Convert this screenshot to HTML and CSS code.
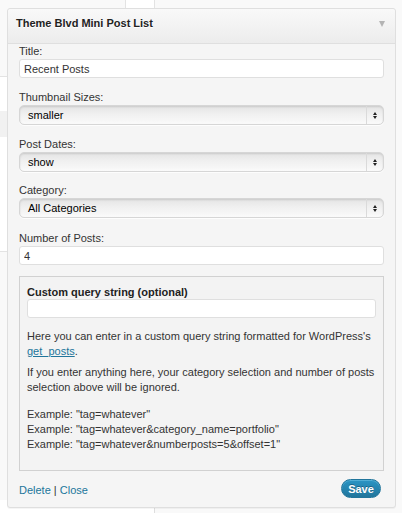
FILE: index.html
```html
<!DOCTYPE html>
<html>
<head>
<meta charset="utf-8">
<link rel="stylesheet" href="styles.css">
</head>
<body>
<div class="backdrop">
  <div class="bd-topcol"></div>
  <div class="bd-left-a"></div>
  <div class="bd-left-b"></div>
  <div class="bd-left-c"></div>
  <div class="bd-bottom"></div>
  <div class="bd-right"></div>
</div>
<div class="widget">
  <div class="widget-top">
    <h4 class="widget-title">Theme Blvd Mini Post List</h4>
    <span class="toggle"></span>
  </div>
  <div class="widget-inside">
    <div class="field f1">
      <label class="lbl">Title:</label>
      <input class="txt" type="text" value="Recent Posts">
    </div>
    <div class="field f2">
      <label class="lbl">Thumbnail Sizes:</label>
      <div class="sel"><span class="sel-val">smaller</span><span class="sel-arrows"><i class="up"></i><i class="dn"></i></span></div>
    </div>
    <div class="field f3">
      <label class="lbl">Post Dates:</label>
      <div class="sel"><span class="sel-val">show</span><span class="sel-arrows"><i class="up"></i><i class="dn"></i></span></div>
    </div>
    <div class="field f4">
      <label class="lbl">Category:</label>
      <div class="sel"><span class="sel-val">All Categories</span><span class="sel-arrows"><i class="up"></i><i class="dn"></i></span></div>
    </div>
    <div class="field f5">
      <label class="lbl">Number of Posts:</label>
      <input class="txt" type="text" value="4">
    </div>
    <div class="query">
      <div class="q-title">Custom query string (optional)</div>
      <input class="txt q-input" type="text" value="">
      <p class="q-p q-p1">Here you can enter in a custom query string formatted for WordPress's <a class="lnk" href="#">get_posts</a>.</p>
      <p class="q-p q-p2">If you enter anything here, your category selection and number of posts selection above will be ignored.</p>
      <p class="q-p q-ex">Example: "tag=whatever"<br>Example: "tag=whatever&amp;category_name=portfolio"<br>Example: "tag=whatever&amp;numberposts=5&amp;offset=1"</p>
    </div>
    <div class="controls">
      <div class="links"><a class="act" href="#">Delete</a> <span class="sep">|</span> <a class="act" href="#">Close</a></div>
      <button class="save" type="button">Save</button>
    </div>
  </div>
</div>
</body>
</html>
```
FILE: styles.css
```css
html, body {
  margin: 0;
  padding: 0;
}
body {
  width: 402px;
  height: 513px;
  overflow: hidden;
  position: relative;
  background: #f9f9f9;
  font-family: "Liberation Sans", Arial, sans-serif;
  font-size: 11px;
  color: #333;
}
.backdrop {
  position: absolute;
  left: 0;
  top: 0;
  width: 402px;
  height: 513px;
  z-index: 0;
}
.bd-topcol {
  position: absolute;
  left: 125px;
  top: 0;
  width: 28px;
  height: 10px;
  background: #fff;
  border-left: 1px solid #e3e3e3;
  border-right: 1px solid #e3e3e3;
}
.bd-left-a {
  position: absolute;
  left: 0;
  top: 76px;
  width: 8px;
  height: 34px;
  background: #fff;
  border-top: 1px solid #e3e3e3;
  border-bottom: 1px solid #dcdcdc;
}
.bd-left-b {
  position: absolute;
  left: 0;
  top: 111px;
  width: 8px;
  height: 26px;
  background: #f1f1f1;
}
.bd-left-c {
  position: absolute;
  left: 0;
  top: 137px;
  width: 8px;
  height: 114px;
  background: #fff;
  border-bottom: 1px solid #e3e3e3;
}
.bd-bottom {
  position: absolute;
  left: 0;
  top: 500px;
  width: 154px;
  height: 13px;
  background: #fff;
  border-right: 1px solid #dedede;
}
.bd-right {
  position: absolute;
  left: 397px;
  top: 0;
  width: 5px;
  height: 513px;
  background: #f9f9f9;
}
.widget {
  position: relative;
  z-index: 1;
  margin: 8px 0 0 7px;
  width: 389px;
  box-sizing: border-box;
  border: 1px solid #dfdfdf;
  border-radius: 3px;
  background: #f5f5f5;
  box-shadow: 0 1px 0 rgba(0,0,0,0.04);
}
.widget-top {
  display: flex;
  justify-content: space-between;
  align-items: flex-start;
  padding: 8px 10px 13px 8px;
  background: linear-gradient(to bottom, #f9f9f9, #ececec);
  border-bottom: 1px solid #dfdfdf;
  border-radius: 3px 3px 0 0;
}
.widget-title {
  margin: 0;
  font-size: 11px;
  line-height: 13px;
  font-weight: bold;
  color: #222;
  text-shadow: 0 1px 0 #fff;
}
.toggle {
  margin-top: 4px;
  width: 0;
  height: 0;
  border-left: 3.5px solid transparent;
  border-right: 3.5px solid transparent;
  border-top: 6px solid #b4b4b4;
}
.widget-inside {
  padding: 0 11px;
}
.field {
  display: flex;
  flex-direction: column;
}
.f1, .f2 { margin-bottom: 12px; }
.f3 { margin-bottom: 11px; }
.f4 { margin-bottom: 13px; }
.f5 { margin-bottom: 11px; }
.lbl {
  display: block;
  line-height: 15px;
  color: #333;
}
.txt {
  display: block;
  box-sizing: border-box;
  width: 100%;
  height: 19px;
  margin: 0;
  padding: 0 4px;
  border: 1px solid #dfdfdf;
  border-radius: 3px;
  background: #fff;
  font-family: "Liberation Sans", Arial, sans-serif;
  font-size: 11px;
  color: #333;
  outline: none;
}
.sel {
  display: flex;
  align-items: stretch;
  box-sizing: border-box;
  height: 20px;
  border-radius: 5px;
  border: 1px solid #d6d6d6;
  background: linear-gradient(to bottom, #e4e4e4 0%, #f0f0f0 45%, #f6f6f6 80%, #fbfbfb 100%);
  box-shadow: inset 0 1px 2px rgba(0,0,0,0.12), 0 1px 0 rgba(255,255,255,0.8);
}
.sel-val {
  flex: 1;
  padding-left: 8px;
  line-height: 18px;
  color: #000;
}
.sel-arrows {
  width: 16px;
  border-left: 1px solid #dadada;
  display: flex;
  flex-direction: column;
  align-items: center;
  justify-content: center;
  gap: 1px;
}
.sel-arrows i {
  display: block;
  width: 0;
  height: 0;
  border-left: 2.5px solid transparent;
  border-right: 2.5px solid transparent;
}
.sel-arrows .up { border-bottom: 3px solid #222; }
.sel-arrows .dn { border-top: 3px solid #222; }
.query {
  border: 1px solid #d1d1d1;
  background: #f3f3f3;
  padding: 8px 7px 18px 7px;
}
.q-title {
  font-weight: bold;
  line-height: 14px;
  color: #222;
}
.q-input {
  height: 19px;
}
.q-p {
  margin: 0;
  line-height: 15px;
  color: #333;
}
.q-p1 { margin-top: 11px; }
.q-p2 { margin-top: 6px; }
.q-ex { margin-top: 12px; }
.lnk {
  color: #21759b;
  text-decoration: underline;
}
.controls {
  display: flex;
  justify-content: space-between;
  align-items: center;
  padding: 8px 3px 9px 0;
}
.links {
  padding-top: 3px;
  color: #333;
}
.act {
  color: #21759b;
  text-decoration: none;
}
.sep { color: #333; }
.save {
  box-sizing: border-box;
  height: 19px;
  width: 40px;
  padding: 0;
  border: 1px solid #21759b;
  border-radius: 10px;
  background: linear-gradient(to bottom, #2a95c5, #21759b);
  color: #fff;
  font-family: "Liberation Sans", Arial, sans-serif;
  font-size: 11px;
  font-weight: bold;
  text-shadow: 0 -1px 0 rgba(0,0,0,0.3);
  box-shadow: inset 0 1px 0 rgba(120,200,230,0.5);
}
```
